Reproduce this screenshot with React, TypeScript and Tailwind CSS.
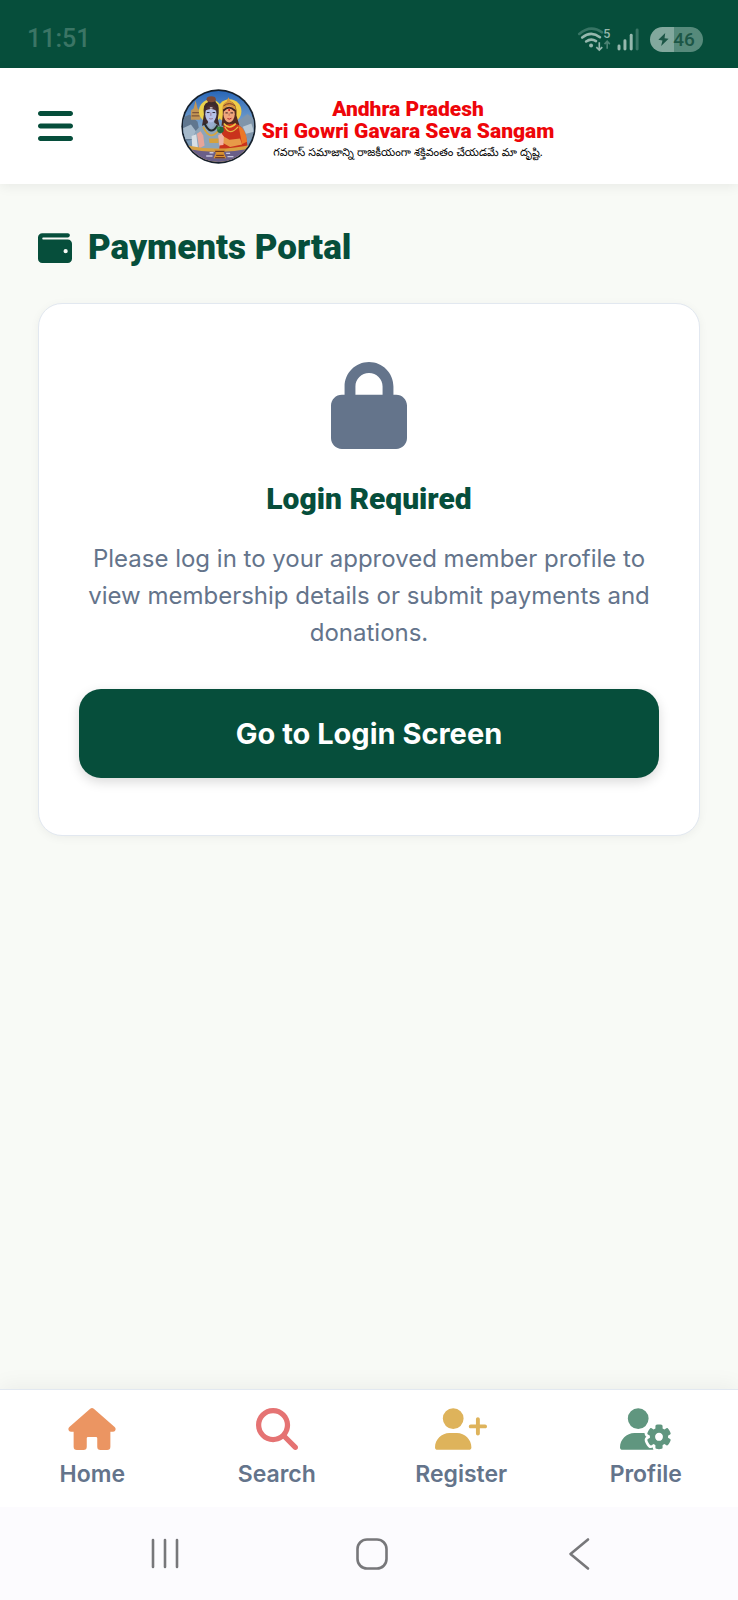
import type { ReactNode } from "react";
import {
  FaBars,
  FaLock,
  FaMagnifyingGlass,
  FaUserGear,
  FaUserPlus,
  FaWallet,
} from "react-icons/fa6";

type IconProps = {
  className?: string;
};

type NavItem = {
  label: string;
  icon: (props: IconProps) => ReactNode;
  color: string;
};

const HouseIcon = ({ className }: IconProps) => (
  <svg viewBox="0 0 576 512" className={className} fill="currentColor">
    <path d="M266 8 Q288 -8 310 8 L564 231 Q576 242 576 257 Q575 288 543 288 H512 V472 Q512 512 472 512 H392 Q352 512 352 472 V368 Q352 352 336 352 H240 Q224 352 224 368 V472 Q224 512 184 512 H104 Q64 512 64 472 V288 H33 Q1 288 0 257 Q0 242 12 231 Z" />
  </svg>
);

const navItems: NavItem[] = [
  { label: "Home", icon: HouseIcon, color: "text-[#eb9562]" },
  { label: "Search", icon: FaMagnifyingGlass, color: "text-[#e57373]" },
  { label: "Register", icon: FaUserPlus, color: "text-[#deb35b]" },
  { label: "Profile", icon: FaUserGear, color: "text-[#60967f]" },
];

const StatusBar = () => (
  <div className="flex h-[68px] items-center justify-between bg-[#064e3b] pt-2.5 pr-[35px] pl-[27px]">
    <span className="font-['Roboto',sans-serif] text-[25px] font-medium text-[#3b7565]">
      11:51
    </span>

    <div className="flex items-center gap-2.5">
      <svg viewBox="114 76 190 76" className="h-[25px] w-[63px]" fill="none">
        {/* Wifi */}
        <g strokeLinecap="round" strokeWidth="8">
          <path d="M120 97 Q155 68 189 92" stroke="#377464" />
          <path d="M129 108 Q156 86 183 107" stroke="#96b8ae" />
          <path d="M141 120 Q156 109 171 119" stroke="#96b8ae" />
        </g>
        <circle cx="156" cy="132" r="6" fill="#96b8ae" />
        <path d="M181 122 V145 M172 137 L181 146 L190 137" stroke="#96b8ae" strokeWidth="5" />
        <path d="M205 142 V121 M197 128 L205 119 L213 128" stroke="#4c8273" strokeWidth="5" />
        <text
          x="193"
          y="108"
          fill="#96b8ae"
          className="font-['Roboto',sans-serif] text-[38px] font-medium"
        >
          5
        </text>
        {/* Signal */}
        <g strokeLinecap="round" strokeWidth="9">
          <path d="M241 134 V143" stroke="#96b8ae" />
          <path d="M259 118 V143" stroke="#96b8ae" />
          <path d="M278 101 V143" stroke="#96b8ae" />
          <path d="M296 85 V143" stroke="#377464" />
        </g>
      </svg>

      <div className="flex h-[25px] w-[53px] items-center justify-center gap-1 rounded-full bg-linear-to-r from-[#82a89d] from-46% to-[#568a7b] to-46% text-[#1c5646]">
        <svg viewBox="0 0 30 38" className="h-[13px] w-[11px]" fill="currentColor">
          <path d="M20 0 L0 20 L12 22 L8 38 L30 17 L18 15 Z" />
        </svg>
        <span className="font-['Roboto',sans-serif] text-[19px] leading-none font-medium">46</span>
      </div>
    </div>
  </div>
);

const Emblem = () => (
  <svg viewBox="32 42 226 224" className="h-[75px] w-[75px] shrink-0">
    <defs>
      <clipPath id="emblem">
        <circle cx="145" cy="154" r="107" />
      </clipPath>
      <linearGradient id="sky" x1="0" y1="0" x2="0" y2="1">
        <stop offset="0" stopColor="#2464b8" />
        <stop offset="0.5" stopColor="#7ea6cd" />
        <stop offset="1" stopColor="#6d8193" />
      </linearGradient>
    </defs>
    <circle cx="145" cy="154" r="112" fill="#16202c" />
    <g clipPath="url(#emblem)">
      <rect x="32" y="42" width="226" height="224" fill="url(#sky)" />
      {/* Hills and temple */}
      <path d="M32 130 L58 118 L82 140 L92 190 L32 200 Z" fill="#60778f" />
      <path d="M62 134 V106 L70 100 L76 76 L82 100 L90 108 V134 Z" fill="#c39655" />
      <path d="M66 112 H86 M64 122 H88" stroke="#80563a" strokeWidth="4" />
      <path d="M205 138 L232 116 L262 138 V190 H210 Z" fill="#8095aa" />
      <path d="M36 160 L62 148 L78 170 L66 192 H36 Z" fill="#a5b9ca" />
      <path d="M218 155 L244 145 L252 170 L228 176 Z" fill="#b9c8d4" />
      {/* Halos */}
      <circle cx="121" cy="108" r="35" fill="#ead24c" />
      <circle cx="178" cy="108" r="36" fill="#f0cd48" />
      {/* Left figure */}
      <path d="M101 118 Q97 84 113 81 L116 68 L133 68 L137 81 Q151 91 143 130 L150 160 H94 Z" fill="#3d2a2c" />
      <ellipse cx="123" cy="72" rx="14" ry="9" fill="#7e4934" />
      <path d="M65 216 Q66 160 100 150 L117 142 H132 L154 158 L160 218 L104 232 Z" fill="#8da5b9" />
      <path d="M113 132 H132 V150 L122 160 L113 150 Z" fill="#99add0" />
      <ellipse cx="122" cy="117" rx="17" ry="25" fill="#b5c1e8" />
      <path d="M105 106 Q109 89 122 90 Q136 89 140 107 Q123 96 105 106 Z" fill="#4b3035" />
      <path d="M119 97 H127 M119 101 H127" stroke="#fff" strokeWidth="2" />
      <path d="M110 112 H118 M127 112 H135" stroke="#292536" strokeWidth="3" />
      <path d="M122 112 V122 M117 130 Q122 133 128 130" stroke="#87516b" strokeWidth="2" fill="none" />
      <path d="M103 145 Q122 185 142 150" stroke="#252b2c" strokeWidth="6" fill="none" />
      <path d="M99 155 Q121 204 149 160" stroke="#d9a63b" strokeWidth="5" fill="none" />
      <path d="M80 176 L91 168 L99 181 L103 211 L87 220 Z" fill="#e7a59a" />
      <path d="M64 183 L78 177 L83 218 L66 218 Z" fill="#d8dfe5" />
      {/* Right figure */}
      <path d="M158 118 Q154 82 178 78 Q202 82 199 121 L208 150 L154 152 Z" fill="#51291f" />
      <path d="M157 104 Q155 85 169 80 L175 66 L182 79 Q198 84 197 105 Q178 89 157 104 Z" fill="#d8973a" />
      <path d="M160 92 Q178 78 195 92" stroke="#7b3c29" strokeWidth="3" fill="none" />
      <path d="M158 154 Q172 144 196 146 Q226 153 232 211 L212 231 L147 222 Z" fill="#c9331c" />
      <path d="M205 151 Q229 162 231 200 L216 207 Z" fill="#ec7726" />
      <ellipse cx="177" cy="117" rx="17" ry="25" fill="#efa57d" />
      <path d="M160 106 Q177 88 194 106" stroke="#3a201e" strokeWidth="5" fill="none" />
      <path d="M166 113 H173 M181 113 H189" stroke="#35201f" strokeWidth="3" />
      <path d="M177 114 V122" stroke="#a35f48" strokeWidth="2" />
      <path d="M172 130 Q178 134 184 129" stroke="#ad202b" strokeWidth="3" fill="none" />
      <circle cx="177" cy="104" r="3" fill="#c4191c" />
      <path d="M161 145 Q178 166 197 145" stroke="#f0c343" strokeWidth="5" fill="none" />
      <path d="M164 155 Q178 184 204 155" stroke="#e4b846" strokeWidth="4" fill="none" />
      <path d="M158 183 L178 194 L210 190 L216 208 L180 216 L156 202 Z" fill="#e79a48" />
      <path d="M144 181 L154 174 L161 184 L160 210 L147 211 Z" fill="#efb3a3" />
      {/* Leaves between the figures */}
      <circle cx="151" cy="164" r="10" fill="#25673b" />
      <circle cx="144" cy="159" r="5" fill="#3d8a46" />
      <path d="M116 190 H145 V204 H118 Z" fill="#d6a13c" />
      {/* Platform */}
      <path d="M42 210 Q144 232 248 208 V272 H42 Z" fill="#d7a143" />
      <path d="M52 222 Q144 240 238 221 V272 H52 Z" fill="#6a5f88" />
      <path d="M118 233 H130 M108 243 H127 M168 235 H180 M172 245 H190" stroke="#c7c6dd" strokeWidth="4" />
      <path d="M132 223 H167 L161 233 L168 250 H130 L137 234 Z" fill="#d8902f" />
      <path d="M135 229 H163 M138 241 H161 M135 248 H164" stroke="#602b1c" strokeWidth="3" />
    </g>
  </svg>
);

const Header = () => (
  <header className="z-10 flex h-[116px] items-center justify-between bg-white px-[38px] shadow-[0_2px_12px_rgba(0,0,0,0.07)]">
    <button aria-label="Open menu" className="text-[#064e3b]">
      <FaBars className="h-10 w-[35px]" />
    </button>

    <a href="#home" className="flex items-center gap-1.5">
      <Emblem />
      <span className="flex flex-col items-center pt-3 whitespace-nowrap">
        <span className="font-['Roboto',sans-serif] text-[21px] leading-[22px] font-black text-[#ee0509]">
          Andhra Pradesh
        </span>
        <span className="font-['Roboto',sans-serif] text-[21px] leading-[22px] font-black text-[#ee0509]">
          Sri Gowri Gavara Seva Sangam
        </span>
        <span
          lang="te"
          className="font-['Noto_Sans_Telugu','Noto_Sans',sans-serif] text-[11px] leading-6 text-black"
        >
          గవరాస్ సమాజాన్ని రాజకీయంగా శక్తివంతం చేయడమే మా దృష్టి.
        </span>
      </span>
    </a>

    <div className="w-[38px]" />
  </header>
);

const LoginCard = () => (
  <section className="flex flex-col items-center rounded-3xl border border-[#e2e8f0] bg-white px-10 pt-[58px] pb-[57px] text-center shadow-[0_2px_10px_rgba(0,0,0,0.05)]">
    <FaLock className="h-[87px] w-[76px] text-[#64748b]" />
    <h2 className="mt-8 font-['Roboto',sans-serif] text-[30px] leading-9 font-black text-[#064e3b]">
      Login Required
    </h2>
    <p className="mt-[23px] text-[24px] leading-[37px] text-[#64748b]">
      Please log in to your approved member profile to view membership details or submit
      payments and donations.
    </p>
    <button className="mt-[38px] h-[89px] w-full rounded-[22px] bg-[#064e3b] text-[29px] font-bold text-white shadow-[0_4px_12px_rgba(0,0,0,0.15)]">
      Go to Login Screen
    </button>
  </section>
);

const BottomNav = () => (
  <nav className="grid grid-cols-4 border-t border-[#e2e8f0] bg-white pt-[18px] pb-[19px] shadow-[0_-4px_20px_rgba(0,0,0,0.05)]">
    {navItems.map(({ label, icon: Icon, color }) => (
      <a key={label} href={`#${label.toLowerCase()}`} className="flex flex-col items-center gap-2.5">
        <Icon className={`h-[42px] w-[52px] ${color}`} />
        <span className="text-[23px] leading-7 font-semibold text-[#64748b]">{label}</span>
      </a>
    ))}
  </nav>
);

const SystemButton = ({ label, children }: { label: string; children: ReactNode }) => (
  <button aria-label={label} className="flex justify-center">
    <svg
      viewBox="0 0 34 34"
      className="h-[34px] w-[34px]"
      fill="none"
      stroke="#77777a"
      strokeWidth="2.6"
      strokeLinecap="round"
      strokeLinejoin="round"
    >
      {children}
    </svg>
  </button>
);

const SystemBar = () => (
  <div className="grid h-[93px] grid-cols-3 items-center bg-[#fcfbfe] pr-[56px] pl-[62px]">
    <SystemButton label="Recent apps">
      <path d="M5 3 V30 M17 3 V30 M29 3 V30" />
    </SystemButton>
    <SystemButton label="Home screen">
      <rect x="2.5" y="2.5" width="29" height="29" rx="9.5" />
    </SystemButton>
    <SystemButton label="Back">
      <path d="M26 2.5 L8.5 17 L26 31.5" />
    </SystemButton>
  </div>
);

export default function App() {
  return (
    <div className="flex min-h-screen flex-col bg-[#f8faf6] font-['Inter',sans-serif]">
      <StatusBar />
      <Header />

      <main className="flex-1 px-[38px] pt-[42px] pb-8">
        <h1 className="mb-[33px] flex items-center gap-4 font-['Roboto',sans-serif] text-[35px] leading-[44px] font-black text-[#064e3b]">
          <FaWallet className="h-[34px] w-[34px]" />
          Payments Portal
        </h1>
        <LoginCard />
      </main>

      <BottomNav />
      <SystemBar />
    </div>
  );
}
